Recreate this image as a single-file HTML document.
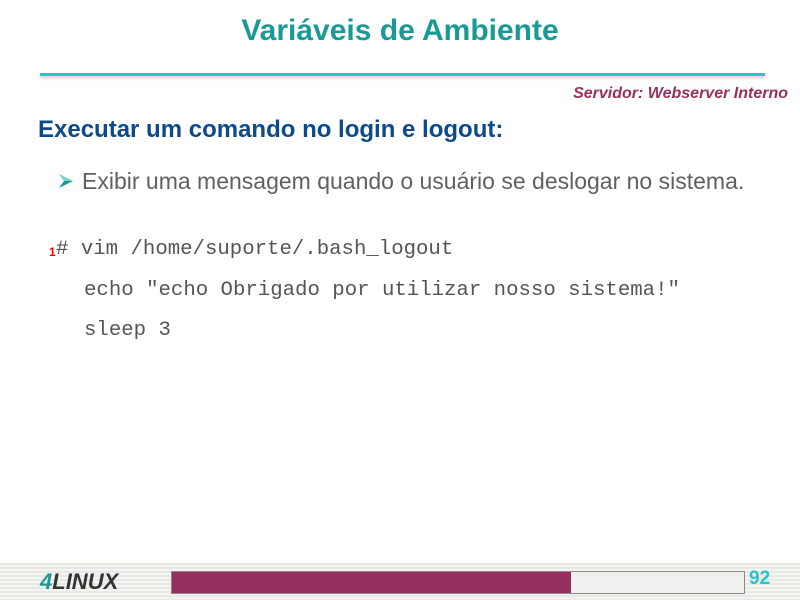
<!DOCTYPE html>
<html><head><meta charset="utf-8"><style>
body{margin:0;width:800px;height:600px;background:#fff;position:relative;overflow:hidden;font-family:"Liberation Sans",sans-serif}
.a{position:absolute;white-space:nowrap}
.title{left:0;width:800px;text-align:center;top:14px;font-size:30px;font-weight:bold;color:#1a9a94}
.line{left:40px;width:725px;top:73px;height:3px;background:#2cc6c6;box-shadow:0 2px 3px #ccc}
.srv{right:12px;top:85px;font-size:16px;font-style:italic;font-weight:bold;color:#98305f}
.h{left:38px;top:116px;font-size:24px;font-weight:bold;color:#0d4a8a}
.b{left:82px;top:168px;font-size:23px;color:#606060}
.code{font-family:"Liberation Mono",monospace;font-size:20.7px;color:#555}
.foot{left:0;top:563px;width:800px;height:37px;background:repeating-linear-gradient(#e8e8e4 0 2px,#f4f4f0 2px 4px)}
</style></head><body>
<div class="a title">Variáveis de Ambiente</div>
<div class="a line"></div>
<div class="a srv">Servidor: Webserver Interno</div>
<div class="a h">Executar um comando no login e logout:</div>
<svg class="a" style="left:58px;top:173px" width="16" height="16" viewBox="0 0 16 16"><path d="M1 1 L15 8 L1 15 L6 8 Z" fill="#1a9a94"/><path d="M1 1 L15 8 L6 8Z" fill="#7fd3d0"/></svg>
<div class="a b">Exibir uma mensagem quando o usuário se deslogar no sistema.</div>
<div class="a" style="left:49px;top:245px;font-size:12px;font-weight:bold;color:#e00">1</div>
<div class="a code" style="left:56px;top:238px"># vim /home/suporte/.bash_logout</div>
<div class="a code" style="left:84px;top:279px">echo "echo Obrigado por utilizar nosso sistema!"</div>
<div class="a code" style="left:84px;top:319px">sleep 3</div>
<div class="a foot"></div>
<div class="a" style="left:40px;top:569px;font-size:22px;font-weight:bold;font-style:italic;color:#333"><span style="color:#1a9a94">4</span>LINUX</div>
<div class="a" style="left:171px;top:571px;width:572px;height:21px;border:1px solid #888;background:#f0f0ee"></div>
<div class="a" style="left:172px;top:572px;width:399px;height:21px;background:#98305f"></div>
<div class="a" style="left:749px;top:568px;font-size:19px;font-weight:bold;color:#22c4c4">92</div>
</body></html>
